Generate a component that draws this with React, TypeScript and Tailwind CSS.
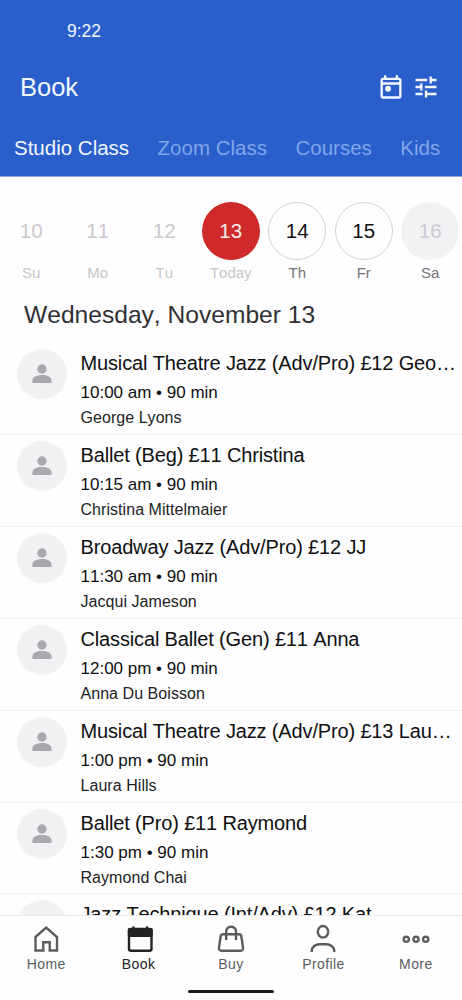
import type { ReactNode } from 'react';

const tabs = ['Studio Class', 'Zoom Class', 'Courses', 'Kids'];

const days = [
  { date: 10, label: 'Su', circle: 'border border-[#fbfbfb] text-[#cdc9cd]', text: 'text-[#c9c5c9]' },
  { date: 11, label: 'Mo', circle: 'border border-[#fbfbfb] text-[#cdc9cd]', text: 'text-[#c9c5c9]' },
  { date: 12, label: 'Tu', circle: 'border border-[#fbfbfb] text-[#cdc9cd]', text: 'text-[#c9c5c9]' },
  { date: 13, label: 'Today', circle: 'bg-[#cf2a2a] text-[#fbeeee]', text: 'text-[#c9c5c9]' },
  { date: 14, label: 'Th', circle: 'border border-[#d3d2d5] text-[#111113]', text: 'text-[#77747a]' },
  { date: 15, label: 'Fr', circle: 'border border-[#d3d2d5] text-[#111113]', text: 'text-[#77747a]' },
  { date: 16, label: 'Sa', circle: 'bg-[#f2f1f4] text-[#cdcbcf]', text: 'text-[#77747a]' },
];

const classes = [
  { title: 'Musical Theatre Jazz (Adv/Pro) £12 Geo…', time: '10:00 am', teacher: 'George Lyons' },
  { title: 'Ballet (Beg) £11 Christina', time: '10:15 am', teacher: 'Christina Mittelmaier' },
  { title: 'Broadway Jazz (Adv/Pro) £12 JJ', time: '11:30 am', teacher: 'Jacqui Jameson' },
  { title: 'Classical Ballet (Gen) £11 Anna', time: '12:00 pm', teacher: 'Anna Du Boisson' },
  { title: 'Musical Theatre Jazz (Adv/Pro) £13 Lau…', time: '1:00 pm', teacher: 'Laura Hills' },
  { title: 'Ballet (Pro) £11 Raymond', time: '1:30 pm', teacher: 'Raymond Chai' },
  { title: 'Jazz Technique (Int/Adv) £12 Kat' },
];

function NavItem({ label, active, children }: { label: string; active?: boolean; children: ReactNode }) {
  return (
    <a href="#" className={`flex flex-1 flex-col items-center ${active ? 'text-[#232326]' : 'text-[#5c5c60]'}`}>
      <svg width="32" height="32" viewBox="0 0 32 32" fill="none" stroke="currentColor" strokeWidth="2.4">
        {children}
      </svg>
      <span className="text-[14px] leading-[18px] tracking-[0.4px]">{label}</span>
    </a>
  );
}

export default function App() {
  return (
    <div className="flex h-[1000px] w-[462px] flex-col overflow-hidden bg-[#fefefe] font-['Liberation_Sans',Arial,sans-serif] [font-kerning:none]">
      <header className="h-[177px] shrink-0 border-b border-[#8fa9e0] bg-[#2a5ecb] text-[#f3f7fe]">
        <div className="pt-[21px] pl-[67px] text-[17.5px] leading-5">9:22</div>
        <div className="mt-7 flex items-center justify-between pr-[22px] pl-5">
          <h1 className="text-[25.5px] leading-9">Book</h1>
          <div className="flex gap-[7px]">
            <svg width="28" height="28" viewBox="0 0 24 24" fill="currentColor">
              <path d="M19 4h-1V2h-2v2H8V2H6v2H5c-1.1 0-2 .9-2 2v14c0 1.1.9 2 2 2h14c1.1 0 2-.9 2-2V6c0-1.1-.9-2-2-2zm0 16H5V10h14v10zm0-12H5V6h14v2z" />
              <circle cx="9.5" cy="13.5" r="2.5" />
            </svg>
            <svg width="28" height="28" viewBox="0 0 24 24" fill="currentColor">
              <path d="M3 17v2h6v-2H3zM3 5v2h10V5H3zm10 16v-2h8v-2h-8v-2h-2v6h2zM7 9v2H3v2h4v2h2V9H7zm14 4v-2H11v2h10zm-6-4h2V7h4V5h-4V3h-2v6z" />
            </svg>
          </div>
        </div>
        <nav className="mt-[31px] flex gap-[28.5px] pl-3.5 text-[20.5px] leading-6 whitespace-nowrap">
          {tabs.map((tab, i) => (
            <a key={tab} href="#" className={i === 0 ? 'text-[#f3f7fe]' : 'text-[#7fa6e9]'}>
              {tab}
            </a>
          ))}
        </nav>
      </header>

      <section className="shrink-0">
        <div className="-ml-[2px] flex w-[466px] pt-[25px]">
          {days.map((day) => (
            <div key={day.date} className="flex w-[66.5px] shrink-0 flex-col items-center">
              <div className={`flex size-[58px] items-center justify-center rounded-full text-[20.5px] ${day.circle}`}>
                {day.date}
              </div>
              <span className={`mt-[3px] text-[15px] leading-5 ${day.text}`}>{day.label}</span>
            </div>
          ))}
        </div>
        <h2 className="mt-[14px] pl-6 text-[24.6px] leading-9 text-[#303035]">Wednesday, November 13</h2>
      </section>

      <main className="mt-[10.4px] min-h-0 flex-1 overflow-hidden">
        {classes.map((item) => (
          <div key={item.title} className="flex h-[91.85px] gap-[13.5px] border-b border-[#f0f0f1] pt-[6px] pr-1 pl-[17px]">
            <div className="flex size-[50px] shrink-0 items-center justify-center rounded-full bg-[#f2f0f3]">
              <svg width="28" height="28" viewBox="0 0 24 24" fill="#aaa8ac">
                <circle cx="12" cy="7.7" r="4" />
                <path d="M3.8 17.5c0-3 4-4.600 8.200-4.600s8.200 1.600 8.200 4.600v1.300q0 1-1 1H4.800q-1 0-1-1z" />
              </svg>
            </div>
            <div className="min-w-0 flex-1 text-[#0f0f11]">
              <h3 className="mt-[2px] text-[20px] leading-6 tracking-[-0.15px] whitespace-nowrap">{item.title}</h3>
              {item.time && (
                <>
                  <p className="mt-[8px] text-[17px] leading-5">{item.time} • 90 min</p>
                  <p className="mt-[5px] text-[16px] leading-5 tracking-[0.05px] text-[#222225]">{item.teacher}</p>
                </>
              )}
            </div>
          </div>
        ))}
      </main>

      <footer className="h-[85px] shrink-0 border-t border-[#e9e9eb] bg-[#fefefe] pt-[7px]">
        <nav className="flex">
          <NavItem label="Home">
            <path d="M5.500 14 16.200 4.500 27 14v13.500h-7.300v-8.300h-6.400v8.300H5.500z" />
          </NavItem>
          <NavItem label="Book" active>
            <rect x="6" y="6" width="22.500" height="21.700" rx="2" />
            <path d="M6 6.500h22.500v6.300H6zM10.500 3.500v4M24 3.500v4" fill="currentColor" strokeLinejoin="round" />
          </NavItem>
          <NavItem label="Buy">
            <path d="M8 11.200h16q2 0 2.300 2l1.700 11.300q.3 3.300-3 3.300H7q-3.300 0-3-3.300l1.700-11.300q.3-2 2.300-2zM11.200 17V8.500c0-6.300 9.800-6.300 9.800 0V17" />
          </NavItem>
          <NavItem label="Profile">
            <ellipse cx="16" cy="8.800" rx="5.200" ry="5.800" />
            <path d="M4.700 29v-1c0-3.700 3.500-6.700 8-6.700h6.600c4.500 0 8 3 8 6.700v1" />
          </NavItem>
          <NavItem label="More">
            <circle cx="6.300" cy="16.300" r="2.600" />
            <circle cx="16" cy="16.300" r="2.600" />
            <circle cx="25.700" cy="16.300" r="2.600" />
          </NavItem>
        </nav>
        <div className="mx-auto mt-[17px] h-[3px] w-[86px] rounded-full bg-[#1c1c1e]" />
      </footer>
    </div>
  );
}
